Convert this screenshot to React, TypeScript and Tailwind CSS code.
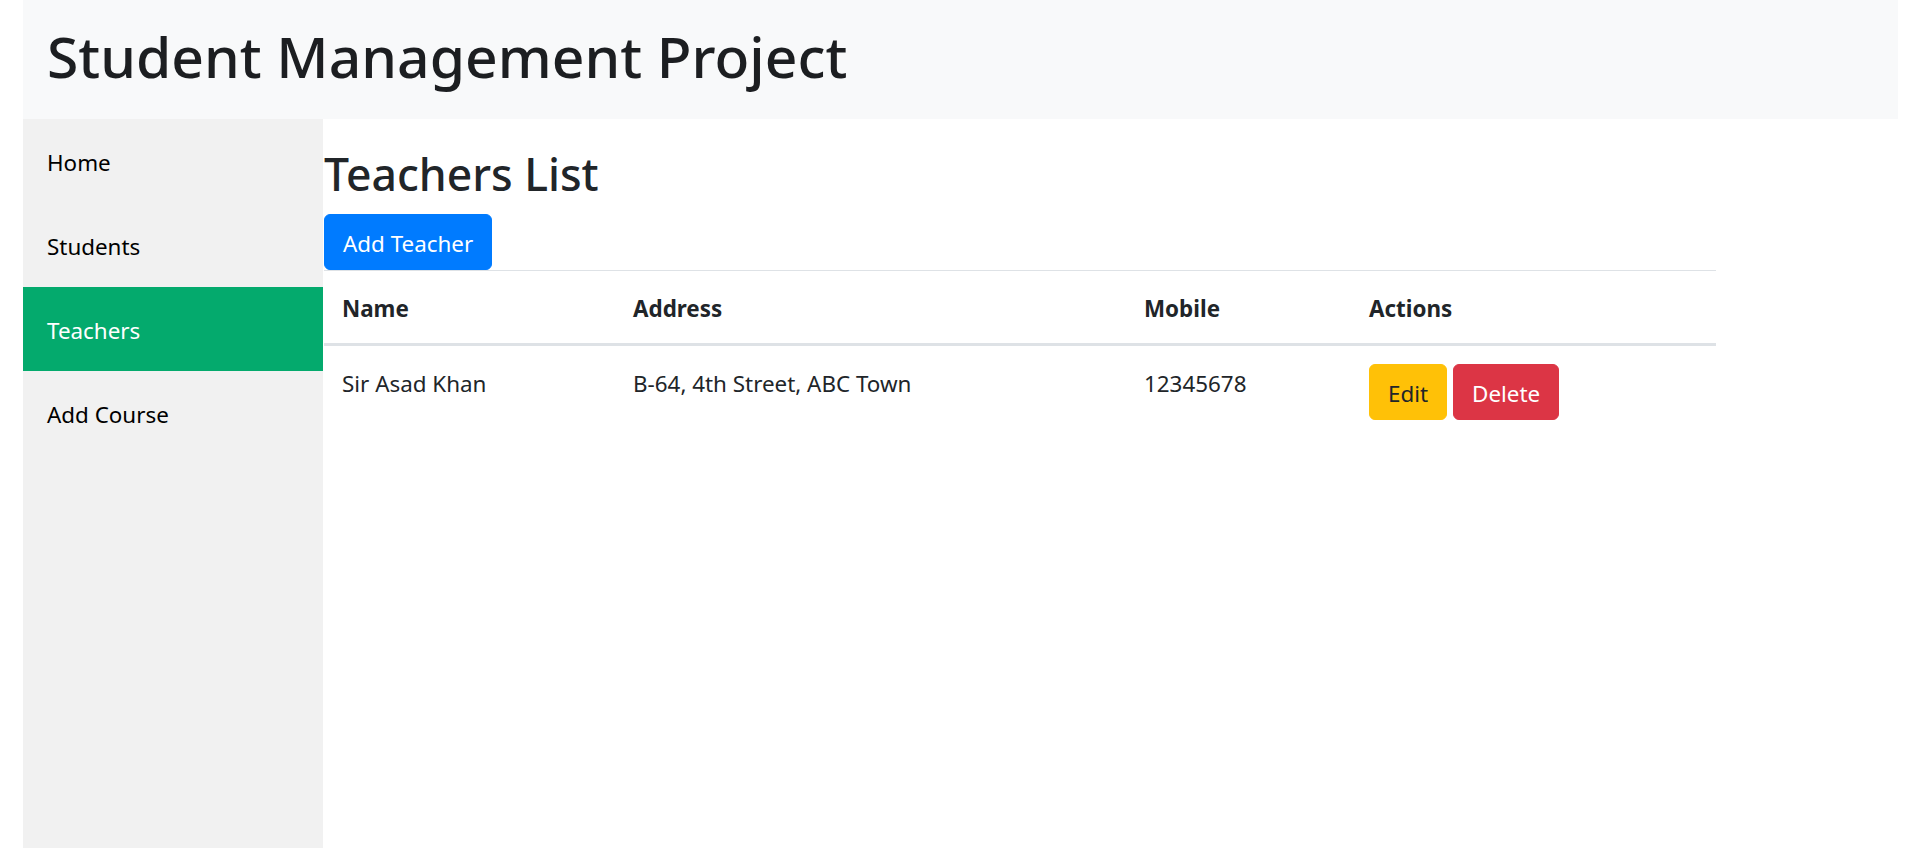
import { useState } from "react";

type Teacher = {
  name: string;
  address: string;
  mobile: string;
};

const navItems = ["Home", "Students", "Teachers", "Add Course"];

const teachers: Teacher[] = [
  { name: "Sir Asad Khan", address: "B-64, 4th Street, ABC Town", mobile: "12345678" },
];

function Sidebar({ active }: { active: string }) {
  return (
    <nav className="w-[300px] shrink-0 bg-[#f1f1f1]">
      {navItems.map((item) => (
        <a
          key={item}
          href="#"
          className={`block px-6 pt-[26px] pb-[22px] text-[22.4px] leading-9 ${
            item === active ? "bg-[#04aa6d] text-white" : "text-black"
          }`}
        >
          {item}
        </a>
      ))}
    </nav>
  );
}

function TeachersTable({ rows }: { rows: Teacher[] }) {
  const th = "border-b-[3px] border-[#dee2e6] px-[18px] pt-5 pb-4 font-bold";
  const td = "px-[18px] pt-5 pb-4 align-top";

  return (
    <table className="w-[1392px] table-fixed border-collapse text-left text-[22.4px] leading-9 text-[#212529]">
      <thead>
        <tr className="border-t border-[#dee2e6]">
          <th className={`w-[291px] ${th}`}>Name</th>
          <th className={`w-[511px] ${th}`}>Address</th>
          <th className={`w-[225px] ${th}`}>Mobile</th>
          <th className={`w-[365px] ${th}`}>Actions</th>
        </tr>
      </thead>
      <tbody>
        {rows.map((t) => (
          <tr key={t.name}>
            <td className={td}>{t.name}</td>
            <td className={td}>{t.address}</td>
            <td className={td}>{t.mobile}</td>
            <td className="p-[18px] align-top">
              <div className="flex gap-[6px]">
                <button className="h-14 rounded-[6px] border border-[#ffc107] bg-[#ffc107] px-[18px] pt-1 text-[#212529]">
                  Edit
                </button>
                <button className="h-14 rounded-[6px] border border-[#dc3545] bg-[#dc3545] px-[18px] pt-1 text-white">
                  Delete
                </button>
              </div>
            </td>
          </tr>
        ))}
      </tbody>
    </table>
  );
}

export default function App() {
  const [active] = useState("Teachers");

  return (
    <div className="flex h-screen flex-col bg-white pl-[23px] pr-[22px] font-['Noto_Sans',sans-serif]">
      <header className="flex h-[119px] shrink-0 items-center bg-[#f8f9fa] pb-2 pl-6">
        <h1 className="text-[57px] font-medium leading-[72px] text-[#1c1e21]">Student Management Project</h1>
      </header>
      <div className="flex flex-1">
        <Sidebar active={active} />
        <main className="ml-px flex-1 pt-[26px]">
          <h2 className="mb-[11px] text-[44.5px] font-medium leading-[57.6px] text-[#212529]">Teachers List</h2>
          <button className="h-14 rounded-[6px] border border-[#007bff] bg-[#007bff] px-[18px] pt-1 text-[22.4px] leading-9 text-white">
            Add Teacher
          </button>
          <TeachersTable rows={teachers} />
        </main>
      </div>
    </div>
  );
}
